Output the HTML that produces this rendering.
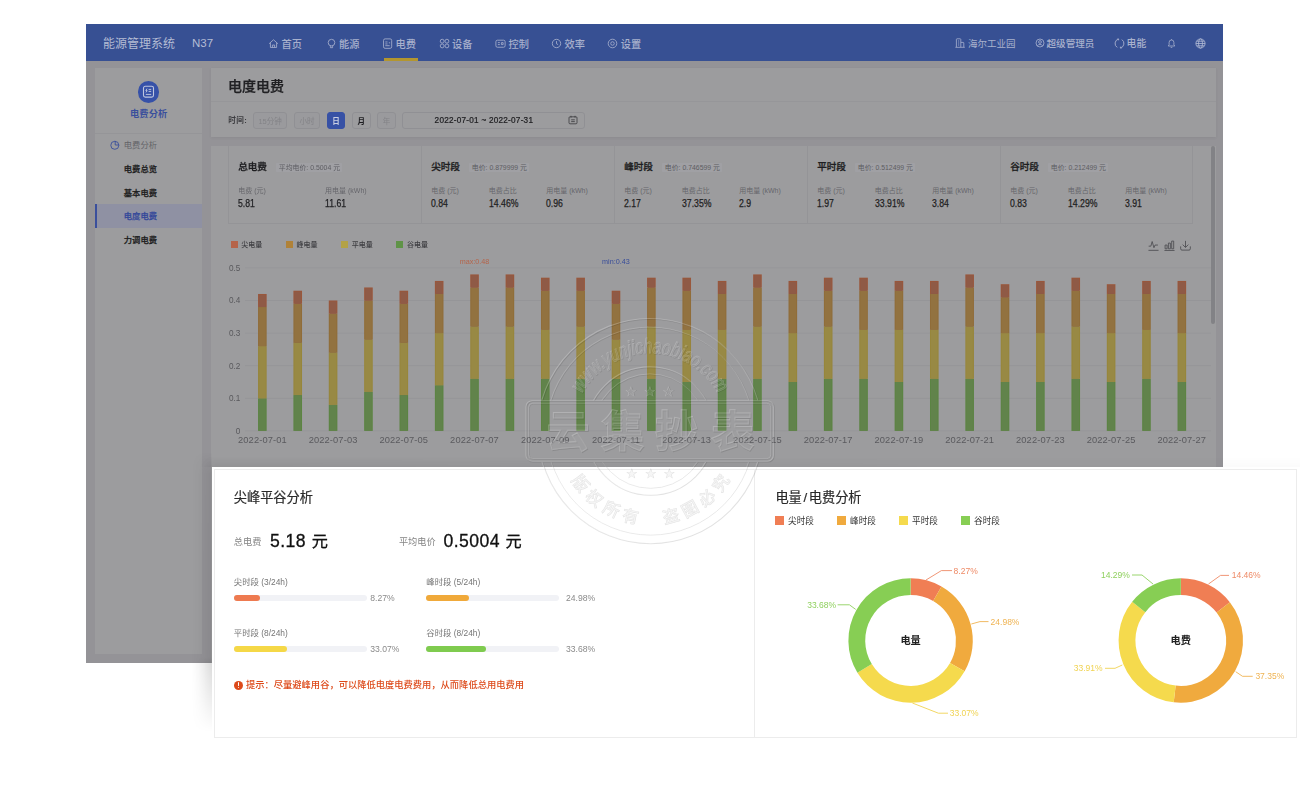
<!DOCTYPE html>
<html lang="zh-CN">
<head>
<meta charset="utf-8">
<title>电度电费 - 能源管理系统</title>
<style>
html,body{margin:0;padding:0;}
body{width:1300px;height:794px;background:#fff;position:relative;overflow:hidden;
 font-family:"Liberation Sans","Noto Sans CJK SC",sans-serif;}
.abs{position:absolute;}
.t{position:absolute;white-space:nowrap;line-height:1;}
#app{position:absolute;left:86px;top:24px;width:1136.5px;height:638.5px;background:#949397;overflow:hidden;}
#appin{position:absolute;left:0;top:0;width:100%;height:100%;filter:blur(0.35px);}
#nav{position:absolute;left:0;top:0;width:100%;height:36.5px;background:#375093;}
.nv{position:absolute;white-space:nowrap;line-height:1;color:#a8b1cd;font-size:10.2px;top:15.5px;font-weight:500;}
.panel{position:absolute;background:#9c9c9e;}
.sb{position:absolute;white-space:nowrap;line-height:1;font-size:8.3px;font-weight:500;color:#1d1d20;-webkit-text-stroke:0.25px;left:37.8px;}
.btn{position:absolute;box-sizing:border-box;border:1px solid #909094;border-radius:3px;height:17px;top:88px;
 font-size:7.5px;line-height:17.2px;text-align:center;color:#838387;background:#9a9a9d;}
.lab{position:absolute;white-space:nowrap;line-height:1;font-size:7px;color:#66666b;}
.val{position:absolute;white-space:nowrap;line-height:1;font-size:10.1px;color:#1f1f22;transform:scaleX(0.86);transform-origin:0 50%;-webkit-text-stroke:0.25px #1f1f22;}
.sth{position:absolute;white-space:nowrap;line-height:1;font-size:9.6px;font-weight:500;color:#1e1e21;-webkit-text-stroke:0.28px;}
.tag{position:absolute;white-space:nowrap;line-height:9.4px;height:9.4px;font-size:6.9px;color:#5d5d62;background:#a0a0a4;padding:0 2.4px;border-radius:1px;}
.lg{position:absolute;white-space:nowrap;line-height:1;font-size:7px;font-weight:500;color:#3e3e42;}
#cards{position:absolute;left:212px;top:467px;width:1092px;height:273px;background:#fff;}
#shl{position:absolute;left:192px;top:452px;width:20px;height:285px;background:linear-gradient(to right,rgba(0,0,0,0),rgba(0,0,0,0.035) 35%,rgba(0,0,0,0.14));
 -webkit-mask-image:linear-gradient(to bottom,rgba(0,0,0,0) 0,rgba(0,0,0,0.45) 22px,rgba(0,0,0,0.5) 205px,#000 212px,rgba(0,0,0,0.55) 245px,rgba(0,0,0,0) 280px);mask-image:linear-gradient(to bottom,rgba(0,0,0,0) 0,rgba(0,0,0,0.45) 22px,rgba(0,0,0,0.5) 205px,#000 212px,rgba(0,0,0,0.55) 245px,rgba(0,0,0,0) 280px);}
#sht{position:absolute;left:200px;top:457px;width:1100px;height:10px;background:linear-gradient(to bottom,rgba(0,0,0,0),rgba(0,0,0,0.055));
 -webkit-mask-image:linear-gradient(to right,rgba(0,0,0,0) 0,#000 16px,rgba(0,0,0,0.9) 200px,rgba(0,0,0,0.35) 700px,rgba(0,0,0,0.3) 100%);mask-image:linear-gradient(to right,rgba(0,0,0,0) 0,#000 16px,rgba(0,0,0,0.9) 200px,rgba(0,0,0,0.35) 700px,rgba(0,0,0,0.3) 100%);}
#cardsb{position:absolute;left:2.3px;top:2px;width:1082.7px;height:269px;border:1px solid #ececec;box-sizing:border-box;}
.ct{position:absolute;white-space:nowrap;line-height:1;font-size:13.2px;font-weight:400;color:#2a2a2a;-webkit-text-stroke:0.2px #2a2a2a;}
.pl{position:absolute;white-space:nowrap;line-height:1;font-size:8.4px;color:#757575;}
.pp{position:absolute;white-space:nowrap;line-height:1;font-size:8.6px;color:#8a8a8a;}
.track{position:absolute;height:6px;width:133px;border-radius:3px;background:#f1f2f6;}
.fill{position:absolute;left:0;top:0;height:6px;border-radius:3px;}
.cl{position:absolute;white-space:nowrap;line-height:1;font-size:8.6px;color:#333;}
</style>
</head>
<body>
<div id="app"><div id="appin">
<div id="nav">
<div class="t" style="left:17px;top:14px;font-size:12px;color:#b4bcd4;letter-spacing:0px;">能源管理系统</div>
<div class="t" style="left:106px;top:13.5px;font-size:11.5px;color:#b4bcd4;">N37</div>
<svg class="abs" style="left:182.1px;top:14.1px" width="11" height="11" viewBox="0 0 10 10" fill="none" stroke="#a3accb" stroke-width="0.8"><path d="M1 5.2 L5 1.6 L9 5.2 M2.2 4.6 V8.6 H7.8 V4.6 M4 8.6 V6.4 H6 V8.6" /></svg>
<div class="nv" style="left:195.6px;">首页</div>
<svg class="abs" style="left:239.6px;top:14.1px" width="11" height="11" viewBox="0 0 10 10" fill="none" stroke="#a3accb" stroke-width="0.8"><circle cx="5" cy="4.2" r="3"/><path d="M4 7.4 V8.8 H6 V7.4"/></svg>
<div class="nv" style="left:253.1px;">能源</div>
<svg class="abs" style="left:296.0px;top:14.1px" width="11" height="11" viewBox="0 0 10 10" fill="none" stroke="#a3accb" stroke-width="0.8"><rect x="1.4" y="0.8" width="7.4" height="8.6" rx="1.4"/><path d="M3 3.6 H5 M3 5.4 H5 M6.2 4.4 H7.4 M3 7 H7"/></svg>
<div class="nv" style="left:309.5px;">电费</div>
<svg class="abs" style="left:352.6px;top:14.1px" width="11" height="11" viewBox="0 0 10 10" fill="none" stroke="#a3accb" stroke-width="0.8"><circle cx="2.9" cy="2.9" r="1.75"/><circle cx="7.2" cy="2.9" r="1.75"/><circle cx="2.9" cy="7.2" r="1.75"/><circle cx="7.2" cy="7.2" r="1.75"/></svg>
<div class="nv" style="left:366.1px;">设备</div>
<svg class="abs" style="left:409.0px;top:14.1px" width="11" height="11" viewBox="0 0 10 10" fill="none" stroke="#a3accb" stroke-width="0.8"><rect x="0.8" y="2" width="8.4" height="6.4" rx="1.4"/><path d="M2.6 4.2 H4.4 M2.6 6 H4.4 M5.8 4.2 H7.4 V6 H5.8 Z"/></svg>
<div class="nv" style="left:422.5px;">控制</div>
<svg class="abs" style="left:465.0px;top:14.1px" width="11" height="11" viewBox="0 0 10 10" fill="none" stroke="#a3accb" stroke-width="0.8"><circle cx="5" cy="5" r="3.8"/><path d="M5 2.8 V5.2 L6.4 6"/></svg>
<div class="nv" style="left:478.5px;">效率</div>
<svg class="abs" style="left:521.3px;top:14.1px" width="11" height="11" viewBox="0 0 10 10" fill="none" stroke="#a3accb" stroke-width="0.8"><circle cx="5" cy="5" r="3.9"/><circle cx="5" cy="5" r="1.6"/></svg>
<div class="nv" style="left:534.8px;">设置</div>
<div class="abs" style="left:298px;top:34.2px;width:34px;height:2.4px;background:#b3962f;"></div>
<svg class="abs" style="left:869px;top:14.2px" width="10" height="10" viewBox="0 0 10 10" fill="none" stroke="#aab3d0" stroke-width="0.8"><path d="M1.4 9.2 V1.4 Q1.4 0.8 2 0.8 H5.2 Q5.8 0.8 5.8 1.4 V9.2 M5.8 4.4 H8.2 Q8.8 4.4 8.8 5 V9.2 M0.4 9.3 H9.8 M3 3 H4.2 M3 5 H4.2 M3 7 H4.2"/></svg>
<div class="nv" style="left:882px;font-size:9.5px;top:14.6px;font-weight:400;color:#a9b2cd;">海尔工业园</div>
<svg class="abs" style="left:949px;top:14.4px" width="10" height="10" viewBox="0 0 10 10" fill="none" stroke="#aab3d0" stroke-width="0.8"><circle cx="5" cy="5" r="4"/><circle cx="5" cy="4" r="1.4"/><path d="M2.4 7.8 C3 6 7 6 7.6 7.8"/></svg>
<div class="nv" style="left:960.5px;font-size:9.6px;top:14.6px;font-weight:500;color:#a9b2cd;">超级管理员</div>
<svg class="abs" style="left:1027.6px;top:13.6px" width="11" height="11" viewBox="0 0 11 11" fill="none" stroke="#a3accb" stroke-width="0.95"><path d="M4.4 1.1 A4.6 4.6 0 0 0 3.2 9.4 M6.6 9.9 A4.6 4.6 0 0 0 7.8 1.6 M3.3 1 H4.6 V2.3 M7.7 10 H6.4 V8.7"/></svg>
<div class="nv" style="left:1040.6px;font-size:9.8px;top:14.5px;font-weight:500;color:#a9b2cd;">电能</div>
<svg class="abs" style="left:1081px;top:13.8px" width="9" height="11" viewBox="0 0 9 11" fill="none" stroke="#a3accb" stroke-width="0.85"><path d="M1.2 8 H7.8 L6.9 6.8 V4.4 A2.4 2.4 0 0 0 2.1 4.4 V6.8 Z M3.7 9.4 H5.3 M4.5 1.2 V2"/></svg>
<svg class="abs" style="left:1109px;top:14px" width="11" height="11" viewBox="0 0 11 11" fill="none" stroke="#b4bcd6" stroke-width="0.8"><circle cx="5.5" cy="5.5" r="4.6"/><ellipse cx="5.5" cy="5.5" rx="2" ry="4.6"/><path d="M0.9 5.5 H10.1 M1.6 3.2 H9.4 M1.6 7.8 H9.4"/></svg>
</div>
<div class="panel" style="left:9.3px;top:43.8px;width:106.7px;height:586.4px;">
<div class="abs" style="left:0;top:65px;width:100%;height:1px;background:#959598;"></div>
<div class="abs" style="left:42.6px;top:13.7px;width:21.2px;height:21.2px;border-radius:50%;background:#3651a8;"></div>
<svg class="abs" style="left:47.2px;top:17.6px" width="13" height="13.4" viewBox="0 0 13 13.4" fill="none" stroke="#bfc6de" stroke-width="1.1"><rect x="1.5" y="1.3" width="10" height="10.8" rx="1.8"/><path d="M5 3.6 L3.8 5.6 H5.2 L4 7.4 M6.6 4.4 H9.2 M6.6 6.4 H9.2 M3.8 9.4 H9.2" stroke-width="0.95"/></svg>
<div class="t" style="left:0;width:106.7px;text-align:center;top:41.8px;font-size:9.3px;font-weight:700;color:#3a4f9c;">电费分析</div>
<svg class="abs" style="left:15px;top:72.6px" width="10" height="10" viewBox="0 0 10 10" fill="none" stroke="#3a4f9c" stroke-width="0.9"><circle cx="4.8" cy="5.3" r="4"/><path d="M5.2 0.9 V5 H9.2"/></svg>
<div class="t" style="left:28.5px;top:73.4px;font-size:8.3px;color:#636368;">电费分析</div>
<div class="abs" style="left:0;top:136.3px;width:106.7px;height:23.7px;background:#8f91a3;"></div>
<div class="abs" style="left:0;top:136.3px;width:1.7px;height:23.7px;background:#3a4f9c;"></div>
<div class="sb" style="left:28.5px;top:97.3px;color:#1d1d20;">电费总览</div>
<div class="sb" style="left:28.5px;top:121.0px;color:#1d1d20;">基本电费</div>
<div class="sb" style="left:28.5px;top:144.7px;color:#34489a;">电度电费</div>
<div class="sb" style="left:28.5px;top:168.3px;color:#1d1d20;">力调电费</div>
</div>
<div class="panel" style="left:124.5px;top:44.3px;width:1005px;height:68.7px;box-shadow:0 1px 3px rgba(0,0,0,0.06);"></div>
<div class="abs" style="left:124.5px;top:76.6px;width:1005px;height:1px;background:#969699;"></div>
<div class="t" style="left:142px;top:55px;font-size:14px;font-weight:500;color:#202023;-webkit-text-stroke:0.25px #202023;">电度电费</div>
<div class="t" style="left:142.2px;top:93.2px;font-size:7.6px;font-weight:700;color:#3c3c40;letter-spacing:0.5px;">时间:</div>
<div class="btn" style="left:167.3px;width:33.5px;">15分钟</div>
<div class="btn" style="left:208.2px;width:25.6px;">小时</div>
<div class="btn" style="left:241px;width:18px;background:#3751a5;border-color:#3751a5;color:#c9cee2;font-weight:700;">日</div>
<div class="btn" style="left:266px;width:18.5px;color:#1d1d20;font-weight:700;background:#9c9c9e;">月</div>
<div class="btn" style="left:291.3px;width:18.5px;">年</div>
<div class="btn" style="left:316.2px;width:183.2px;background:#9c9c9e;"></div>
<div class="t" style="left:348.6px;top:92.8px;font-size:8.2px;color:#1d1d20;letter-spacing:0.24px;-webkit-text-stroke:0.2px #1d1d20;">2022-07-01 ~ 2022-07-31</div>
<svg class="abs" style="left:481.5px;top:91.3px" width="10" height="10" viewBox="0 0 10 10" fill="none" stroke="#3a3a3e" stroke-width="0.8"><rect x="1" y="1.8" width="8" height="7" rx="1"/><path d="M3 0.8 V2.6 M7 0.8 V2.6 M3.2 4.8 H6.8 M3.2 6.6 H6.8"/></svg>
<div class="panel" style="left:124.5px;top:121.9px;width:1005px;height:520px;"></div>
<div class="abs" style="left:1125.3px;top:121.6px;width:3.8px;height:178.4px;border-radius:2px;background:#828286;"></div>
<div class="abs" style="left:142.2px;top:121.9px;width:964.8px;height:78.4px;box-sizing:border-box;border:1px solid #949497;border-top:none;"></div>
<div class="sth" style="left:152.2px;top:137.8px;">总电费</div>
<div class="tag" style="left:190.4px;top:138.6px;">平均电价: 0.5004 元</div>
<div class="lab" style="left:152.2px;top:162.6px;">电费 (元)</div>
<div class="val" style="left:152.2px;top:175.1px;">5.81</div>
<div class="lab" style="left:239.0px;top:162.6px;">用电量 (kWh)</div>
<div class="val" style="left:239.0px;top:175.1px;">11.61</div>
<div class="abs" style="left:334.6px;top:121.9px;width:1px;height:78.4px;background:#949497;"></div>
<div class="sth" style="left:345.2px;top:137.8px;">尖时段</div>
<div class="tag" style="left:383.4px;top:138.6px;">电价: 0.879999 元</div>
<div class="lab" style="left:345.2px;top:162.6px;">电费 (元)</div>
<div class="val" style="left:345.2px;top:175.1px;">0.84</div>
<div class="lab" style="left:402.7px;top:162.6px;">电费占比</div>
<div class="val" style="left:402.7px;top:175.1px;">14.46%</div>
<div class="lab" style="left:460.2px;top:162.6px;">用电量 (kWh)</div>
<div class="val" style="left:460.2px;top:175.1px;">0.96</div>
<div class="abs" style="left:527.6px;top:121.9px;width:1px;height:78.4px;background:#949497;"></div>
<div class="sth" style="left:538.2px;top:137.8px;">峰时段</div>
<div class="tag" style="left:576.4px;top:138.6px;">电价: 0.746599 元</div>
<div class="lab" style="left:538.2px;top:162.6px;">电费 (元)</div>
<div class="val" style="left:538.2px;top:175.1px;">2.17</div>
<div class="lab" style="left:595.7px;top:162.6px;">电费占比</div>
<div class="val" style="left:595.7px;top:175.1px;">37.35%</div>
<div class="lab" style="left:653.2px;top:162.6px;">用电量 (kWh)</div>
<div class="val" style="left:653.2px;top:175.1px;">2.9</div>
<div class="abs" style="left:720.6px;top:121.9px;width:1px;height:78.4px;background:#949497;"></div>
<div class="sth" style="left:731.2px;top:137.8px;">平时段</div>
<div class="tag" style="left:769.4px;top:138.6px;">电价: 0.512499 元</div>
<div class="lab" style="left:731.2px;top:162.6px;">电费 (元)</div>
<div class="val" style="left:731.2px;top:175.1px;">1.97</div>
<div class="lab" style="left:788.7px;top:162.6px;">电费占比</div>
<div class="val" style="left:788.7px;top:175.1px;">33.91%</div>
<div class="lab" style="left:846.2px;top:162.6px;">用电量 (kWh)</div>
<div class="val" style="left:846.2px;top:175.1px;">3.84</div>
<div class="abs" style="left:913.6px;top:121.9px;width:1px;height:78.4px;background:#949497;"></div>
<div class="sth" style="left:924.2px;top:137.8px;">谷时段</div>
<div class="tag" style="left:962.4px;top:138.6px;">电价: 0.212499 元</div>
<div class="lab" style="left:924.2px;top:162.6px;">电费 (元)</div>
<div class="val" style="left:924.2px;top:175.1px;">0.83</div>
<div class="lab" style="left:981.7px;top:162.6px;">电费占比</div>
<div class="val" style="left:981.7px;top:175.1px;">14.29%</div>
<div class="lab" style="left:1039.2px;top:162.6px;">用电量 (kWh)</div>
<div class="val" style="left:1039.2px;top:175.1px;">3.91</div>
<div class="abs" style="left:144.8px;top:217px;width:6.8px;height:6.8px;background:#b5644a;"></div>
<div class="lg" style="left:155.3px;top:217px;">尖电量</div>
<div class="abs" style="left:200.0px;top:217px;width:6.8px;height:6.8px;background:#b08238;"></div>
<div class="lg" style="left:210.5px;top:217px;">峰电量</div>
<div class="abs" style="left:255.2px;top:217px;width:6.8px;height:6.8px;background:#b3a247;"></div>
<div class="lg" style="left:265.7px;top:217px;">平电量</div>
<div class="abs" style="left:310.4px;top:217px;width:6.8px;height:6.8px;background:#5f9347;"></div>
<div class="lg" style="left:320.9px;top:217px;">谷电量</div>
<svg class="abs" style="left:1061.5px;top:215.6px" width="11" height="11" viewBox="0 0 10 10" fill="none" stroke="#4e4e53" stroke-width="0.8"><path d="M0.6 5.6 H2.6 L3.8 1.4 L5.4 7 L6.4 4.6 H9 M0.4 9.4 H9.6"/></svg>
<svg class="abs" style="left:1078.1px;top:215.6px" width="11" height="11" viewBox="0 0 10 10" fill="none" stroke="#4e4e53" stroke-width="0.8"><path d="M1 8 V4.6 H2.8 V8 Z M4 8 V2.8 H5.8 V8 Z M7 8 V1 H8.8 V8 Z M0.4 9.5 H9.6"/></svg>
<svg class="abs" style="left:1093.7px;top:215.6px" width="11" height="11" viewBox="0 0 10 10" fill="none" stroke="#4e4e53" stroke-width="0.8"><path d="M5 0.8 V6.6 M2.4 4.2 L5 6.8 L7.6 4.2 M0.6 5.8 V8 Q0.6 9.2 1.8 9.2 H8.2 Q9.4 9.2 9.4 8 V5.8"/></svg>
<svg class="abs" style="left:0;top:0" width="1136.5" height="638.5" viewBox="86 24 1136.5 638.5" font-family="Liberation Sans, sans-serif">
<rect x="245" y="430.5" width="966" height="0.8" fill="#949497"/>
<text x="240.3" y="433.8" text-anchor="end" font-size="8.2" fill="#59595d">0</text>
<rect x="245" y="397.9" width="966" height="0.8" fill="#949497"/>
<text x="240.3" y="401.2" text-anchor="end" font-size="8.2" fill="#59595d">0.1</text>
<rect x="245" y="365.3" width="966" height="0.8" fill="#949497"/>
<text x="240.3" y="368.6" text-anchor="end" font-size="8.2" fill="#59595d">0.2</text>
<rect x="245" y="332.7" width="966" height="0.8" fill="#949497"/>
<text x="240.3" y="336.0" text-anchor="end" font-size="8.2" fill="#59595d">0.3</text>
<rect x="245" y="300.1" width="966" height="0.8" fill="#949497"/>
<text x="240.3" y="303.4" text-anchor="end" font-size="8.2" fill="#59595d">0.4</text>
<rect x="245" y="267.5" width="966" height="0.8" fill="#949497"/>
<text x="240.3" y="270.8" text-anchor="end" font-size="8.2" fill="#59595d">0.5</text>
<rect x="258.05" y="398.30" width="8.6" height="32.60" fill="#5c8443"/>
<rect x="259.05" y="398.30" width="6.6" height="32.60" fill="#61834b"/>
<rect x="258.05" y="346.14" width="8.6" height="52.16" fill="#97863b"/>
<rect x="259.05" y="346.14" width="6.6" height="52.16" fill="#988944"/>
<rect x="258.05" y="307.02" width="8.6" height="39.12" fill="#906d39"/>
<rect x="259.05" y="307.02" width="6.6" height="39.12" fill="#927240"/>
<rect x="258.05" y="293.98" width="8.6" height="13.04" fill="#99573c"/>
<rect x="259.05" y="294.98" width="6.6" height="12.04" fill="#8f5a46"/>
<text x="262.4" y="443.4" text-anchor="middle" font-size="9.3" letter-spacing="0.12" fill="#5a5a5e">2022-07-01</text>
<rect x="293.42" y="395.04" width="8.6" height="35.86" fill="#5c8443"/>
<rect x="294.42" y="395.04" width="6.6" height="35.86" fill="#61834b"/>
<rect x="293.42" y="342.88" width="8.6" height="52.16" fill="#97863b"/>
<rect x="294.42" y="342.88" width="6.6" height="52.16" fill="#988944"/>
<rect x="293.42" y="303.76" width="8.6" height="39.12" fill="#906d39"/>
<rect x="294.42" y="303.76" width="6.6" height="39.12" fill="#927240"/>
<rect x="293.42" y="290.72" width="8.6" height="13.04" fill="#99573c"/>
<rect x="294.42" y="291.72" width="6.6" height="12.04" fill="#8f5a46"/>
<rect x="328.78" y="404.82" width="8.6" height="26.08" fill="#5c8443"/>
<rect x="329.78" y="404.82" width="6.6" height="26.08" fill="#61834b"/>
<rect x="328.78" y="352.66" width="8.6" height="52.16" fill="#97863b"/>
<rect x="329.78" y="352.66" width="6.6" height="52.16" fill="#988944"/>
<rect x="328.78" y="313.54" width="8.6" height="39.12" fill="#906d39"/>
<rect x="329.78" y="313.54" width="6.6" height="39.12" fill="#927240"/>
<rect x="328.78" y="300.50" width="8.6" height="13.04" fill="#99573c"/>
<rect x="329.78" y="301.50" width="6.6" height="12.04" fill="#8f5a46"/>
<text x="333.1" y="443.4" text-anchor="middle" font-size="9.3" letter-spacing="0.12" fill="#5a5a5e">2022-07-03</text>
<rect x="364.15" y="391.78" width="8.6" height="39.12" fill="#5c8443"/>
<rect x="365.15" y="391.78" width="6.6" height="39.12" fill="#61834b"/>
<rect x="364.15" y="339.62" width="8.6" height="52.16" fill="#97863b"/>
<rect x="365.15" y="339.62" width="6.6" height="52.16" fill="#988944"/>
<rect x="364.15" y="300.50" width="8.6" height="39.12" fill="#906d39"/>
<rect x="365.15" y="300.50" width="6.6" height="39.12" fill="#927240"/>
<rect x="364.15" y="287.46" width="8.6" height="13.04" fill="#99573c"/>
<rect x="365.15" y="288.46" width="6.6" height="12.04" fill="#8f5a46"/>
<rect x="399.51" y="395.04" width="8.6" height="35.86" fill="#5c8443"/>
<rect x="400.51" y="395.04" width="6.6" height="35.86" fill="#61834b"/>
<rect x="399.51" y="342.88" width="8.6" height="52.16" fill="#97863b"/>
<rect x="400.51" y="342.88" width="6.6" height="52.16" fill="#988944"/>
<rect x="399.51" y="303.76" width="8.6" height="39.12" fill="#906d39"/>
<rect x="400.51" y="303.76" width="6.6" height="39.12" fill="#927240"/>
<rect x="399.51" y="290.72" width="8.6" height="13.04" fill="#99573c"/>
<rect x="400.51" y="291.72" width="6.6" height="12.04" fill="#8f5a46"/>
<text x="403.8" y="443.4" text-anchor="middle" font-size="9.3" letter-spacing="0.12" fill="#5a5a5e">2022-07-05</text>
<rect x="434.88" y="385.26" width="8.6" height="45.64" fill="#5c8443"/>
<rect x="435.88" y="385.26" width="6.6" height="45.64" fill="#61834b"/>
<rect x="434.88" y="333.10" width="8.6" height="52.16" fill="#97863b"/>
<rect x="435.88" y="333.10" width="6.6" height="52.16" fill="#988944"/>
<rect x="434.88" y="293.98" width="8.6" height="39.12" fill="#906d39"/>
<rect x="435.88" y="293.98" width="6.6" height="39.12" fill="#927240"/>
<rect x="434.88" y="280.94" width="8.6" height="13.04" fill="#99573c"/>
<rect x="435.88" y="281.94" width="6.6" height="12.04" fill="#8f5a46"/>
<rect x="470.24" y="378.74" width="8.6" height="52.16" fill="#5c8443"/>
<rect x="471.24" y="378.74" width="6.6" height="52.16" fill="#61834b"/>
<rect x="470.24" y="326.58" width="8.6" height="52.16" fill="#97863b"/>
<rect x="471.24" y="326.58" width="6.6" height="52.16" fill="#988944"/>
<rect x="470.24" y="287.46" width="8.6" height="39.12" fill="#906d39"/>
<rect x="471.24" y="287.46" width="6.6" height="39.12" fill="#927240"/>
<rect x="470.24" y="274.42" width="8.6" height="13.04" fill="#99573c"/>
<rect x="471.24" y="275.42" width="6.6" height="12.04" fill="#8f5a46"/>
<text x="474.5" y="443.4" text-anchor="middle" font-size="9.3" letter-spacing="0.12" fill="#5a5a5e">2022-07-07</text>
<rect x="505.61" y="378.74" width="8.6" height="52.16" fill="#5c8443"/>
<rect x="506.61" y="378.74" width="6.6" height="52.16" fill="#61834b"/>
<rect x="505.61" y="326.58" width="8.6" height="52.16" fill="#97863b"/>
<rect x="506.61" y="326.58" width="6.6" height="52.16" fill="#988944"/>
<rect x="505.61" y="287.46" width="8.6" height="39.12" fill="#906d39"/>
<rect x="506.61" y="287.46" width="6.6" height="39.12" fill="#927240"/>
<rect x="505.61" y="274.42" width="8.6" height="13.04" fill="#99573c"/>
<rect x="506.61" y="275.42" width="6.6" height="12.04" fill="#8f5a46"/>
<rect x="540.97" y="378.74" width="8.6" height="52.16" fill="#5c8443"/>
<rect x="541.97" y="378.74" width="6.6" height="52.16" fill="#61834b"/>
<rect x="540.97" y="329.84" width="8.6" height="48.90" fill="#97863b"/>
<rect x="541.97" y="329.84" width="6.6" height="48.90" fill="#988944"/>
<rect x="540.97" y="290.72" width="8.6" height="39.12" fill="#906d39"/>
<rect x="541.97" y="290.72" width="6.6" height="39.12" fill="#927240"/>
<rect x="540.97" y="277.68" width="8.6" height="13.04" fill="#99573c"/>
<rect x="541.97" y="278.68" width="6.6" height="12.04" fill="#8f5a46"/>
<text x="545.3" y="443.4" text-anchor="middle" font-size="9.3" letter-spacing="0.12" fill="#5a5a5e">2022-07-09</text>
<rect x="576.34" y="378.74" width="8.6" height="52.16" fill="#5c8443"/>
<rect x="577.34" y="378.74" width="6.6" height="52.16" fill="#61834b"/>
<rect x="576.34" y="326.58" width="8.6" height="52.16" fill="#97863b"/>
<rect x="577.34" y="326.58" width="6.6" height="52.16" fill="#988944"/>
<rect x="576.34" y="290.72" width="8.6" height="35.86" fill="#906d39"/>
<rect x="577.34" y="290.72" width="6.6" height="35.86" fill="#927240"/>
<rect x="576.34" y="277.68" width="8.6" height="13.04" fill="#99573c"/>
<rect x="577.34" y="278.68" width="6.6" height="12.04" fill="#8f5a46"/>
<rect x="611.70" y="378.74" width="8.6" height="52.16" fill="#5c8443"/>
<rect x="612.70" y="378.74" width="6.6" height="52.16" fill="#61834b"/>
<rect x="611.70" y="339.62" width="8.6" height="39.12" fill="#97863b"/>
<rect x="612.70" y="339.62" width="6.6" height="39.12" fill="#988944"/>
<rect x="611.70" y="303.76" width="8.6" height="35.86" fill="#906d39"/>
<rect x="612.70" y="303.76" width="6.6" height="35.86" fill="#927240"/>
<rect x="611.70" y="290.72" width="8.6" height="13.04" fill="#99573c"/>
<rect x="612.70" y="291.72" width="6.6" height="12.04" fill="#8f5a46"/>
<text x="616.0" y="443.4" text-anchor="middle" font-size="9.3" letter-spacing="0.12" fill="#5a5a5e">2022-07-11</text>
<rect x="647.07" y="378.74" width="8.6" height="52.16" fill="#5c8443"/>
<rect x="648.07" y="378.74" width="6.6" height="52.16" fill="#61834b"/>
<rect x="647.07" y="326.58" width="8.6" height="52.16" fill="#97863b"/>
<rect x="648.07" y="326.58" width="6.6" height="52.16" fill="#988944"/>
<rect x="647.07" y="287.46" width="8.6" height="39.12" fill="#906d39"/>
<rect x="648.07" y="287.46" width="6.6" height="39.12" fill="#927240"/>
<rect x="647.07" y="277.68" width="8.6" height="9.78" fill="#99573c"/>
<rect x="648.07" y="278.68" width="6.6" height="8.78" fill="#8f5a46"/>
<rect x="682.43" y="382.00" width="8.6" height="48.90" fill="#5c8443"/>
<rect x="683.43" y="382.00" width="6.6" height="48.90" fill="#61834b"/>
<rect x="682.43" y="329.84" width="8.6" height="52.16" fill="#97863b"/>
<rect x="683.43" y="329.84" width="6.6" height="52.16" fill="#988944"/>
<rect x="682.43" y="290.72" width="8.6" height="39.12" fill="#906d39"/>
<rect x="683.43" y="290.72" width="6.6" height="39.12" fill="#927240"/>
<rect x="682.43" y="277.68" width="8.6" height="13.04" fill="#99573c"/>
<rect x="683.43" y="278.68" width="6.6" height="12.04" fill="#8f5a46"/>
<text x="686.7" y="443.4" text-anchor="middle" font-size="9.3" letter-spacing="0.12" fill="#5a5a5e">2022-07-13</text>
<rect x="717.80" y="378.74" width="8.6" height="52.16" fill="#5c8443"/>
<rect x="718.80" y="378.74" width="6.6" height="52.16" fill="#61834b"/>
<rect x="717.80" y="329.84" width="8.6" height="48.90" fill="#97863b"/>
<rect x="718.80" y="329.84" width="6.6" height="48.90" fill="#988944"/>
<rect x="717.80" y="293.98" width="8.6" height="35.86" fill="#906d39"/>
<rect x="718.80" y="293.98" width="6.6" height="35.86" fill="#927240"/>
<rect x="717.80" y="280.94" width="8.6" height="13.04" fill="#99573c"/>
<rect x="718.80" y="281.94" width="6.6" height="12.04" fill="#8f5a46"/>
<rect x="753.16" y="378.74" width="8.6" height="52.16" fill="#5c8443"/>
<rect x="754.16" y="378.74" width="6.6" height="52.16" fill="#61834b"/>
<rect x="753.16" y="326.58" width="8.6" height="52.16" fill="#97863b"/>
<rect x="754.16" y="326.58" width="6.6" height="52.16" fill="#988944"/>
<rect x="753.16" y="287.46" width="8.6" height="39.12" fill="#906d39"/>
<rect x="754.16" y="287.46" width="6.6" height="39.12" fill="#927240"/>
<rect x="753.16" y="274.42" width="8.6" height="13.04" fill="#99573c"/>
<rect x="754.16" y="275.42" width="6.6" height="12.04" fill="#8f5a46"/>
<text x="757.5" y="443.4" text-anchor="middle" font-size="9.3" letter-spacing="0.12" fill="#5a5a5e">2022-07-15</text>
<rect x="788.53" y="382.00" width="8.6" height="48.90" fill="#5c8443"/>
<rect x="789.53" y="382.00" width="6.6" height="48.90" fill="#61834b"/>
<rect x="788.53" y="333.10" width="8.6" height="48.90" fill="#97863b"/>
<rect x="789.53" y="333.10" width="6.6" height="48.90" fill="#988944"/>
<rect x="788.53" y="293.98" width="8.6" height="39.12" fill="#906d39"/>
<rect x="789.53" y="293.98" width="6.6" height="39.12" fill="#927240"/>
<rect x="788.53" y="280.94" width="8.6" height="13.04" fill="#99573c"/>
<rect x="789.53" y="281.94" width="6.6" height="12.04" fill="#8f5a46"/>
<rect x="823.89" y="378.74" width="8.6" height="52.16" fill="#5c8443"/>
<rect x="824.89" y="378.74" width="6.6" height="52.16" fill="#61834b"/>
<rect x="823.89" y="326.58" width="8.6" height="52.16" fill="#97863b"/>
<rect x="824.89" y="326.58" width="6.6" height="52.16" fill="#988944"/>
<rect x="823.89" y="290.72" width="8.6" height="35.86" fill="#906d39"/>
<rect x="824.89" y="290.72" width="6.6" height="35.86" fill="#927240"/>
<rect x="823.89" y="277.68" width="8.6" height="13.04" fill="#99573c"/>
<rect x="824.89" y="278.68" width="6.6" height="12.04" fill="#8f5a46"/>
<text x="828.2" y="443.4" text-anchor="middle" font-size="9.3" letter-spacing="0.12" fill="#5a5a5e">2022-07-17</text>
<rect x="859.26" y="378.74" width="8.6" height="52.16" fill="#5c8443"/>
<rect x="860.26" y="378.74" width="6.6" height="52.16" fill="#61834b"/>
<rect x="859.26" y="329.84" width="8.6" height="48.90" fill="#97863b"/>
<rect x="860.26" y="329.84" width="6.6" height="48.90" fill="#988944"/>
<rect x="859.26" y="290.72" width="8.6" height="39.12" fill="#906d39"/>
<rect x="860.26" y="290.72" width="6.6" height="39.12" fill="#927240"/>
<rect x="859.26" y="277.68" width="8.6" height="13.04" fill="#99573c"/>
<rect x="860.26" y="278.68" width="6.6" height="12.04" fill="#8f5a46"/>
<rect x="894.62" y="382.00" width="8.6" height="48.90" fill="#5c8443"/>
<rect x="895.62" y="382.00" width="6.6" height="48.90" fill="#61834b"/>
<rect x="894.62" y="329.84" width="8.6" height="52.16" fill="#97863b"/>
<rect x="895.62" y="329.84" width="6.6" height="52.16" fill="#988944"/>
<rect x="894.62" y="290.72" width="8.6" height="39.12" fill="#906d39"/>
<rect x="895.62" y="290.72" width="6.6" height="39.12" fill="#927240"/>
<rect x="894.62" y="280.94" width="8.6" height="9.78" fill="#99573c"/>
<rect x="895.62" y="281.94" width="6.6" height="8.78" fill="#8f5a46"/>
<text x="898.9" y="443.4" text-anchor="middle" font-size="9.3" letter-spacing="0.12" fill="#5a5a5e">2022-07-19</text>
<rect x="929.99" y="378.74" width="8.6" height="52.16" fill="#5c8443"/>
<rect x="930.99" y="378.74" width="6.6" height="52.16" fill="#61834b"/>
<rect x="929.99" y="329.84" width="8.6" height="48.90" fill="#97863b"/>
<rect x="930.99" y="329.84" width="6.6" height="48.90" fill="#988944"/>
<rect x="929.99" y="293.98" width="8.6" height="35.86" fill="#906d39"/>
<rect x="930.99" y="293.98" width="6.6" height="35.86" fill="#927240"/>
<rect x="929.99" y="280.94" width="8.6" height="13.04" fill="#99573c"/>
<rect x="930.99" y="281.94" width="6.6" height="12.04" fill="#8f5a46"/>
<rect x="965.35" y="378.74" width="8.6" height="52.16" fill="#5c8443"/>
<rect x="966.35" y="378.74" width="6.6" height="52.16" fill="#61834b"/>
<rect x="965.35" y="326.58" width="8.6" height="52.16" fill="#97863b"/>
<rect x="966.35" y="326.58" width="6.6" height="52.16" fill="#988944"/>
<rect x="965.35" y="287.46" width="8.6" height="39.12" fill="#906d39"/>
<rect x="966.35" y="287.46" width="6.6" height="39.12" fill="#927240"/>
<rect x="965.35" y="274.42" width="8.6" height="13.04" fill="#99573c"/>
<rect x="966.35" y="275.42" width="6.6" height="12.04" fill="#8f5a46"/>
<text x="969.7" y="443.4" text-anchor="middle" font-size="9.3" letter-spacing="0.12" fill="#5a5a5e">2022-07-21</text>
<rect x="1000.72" y="382.00" width="8.6" height="48.90" fill="#5c8443"/>
<rect x="1001.72" y="382.00" width="6.6" height="48.90" fill="#61834b"/>
<rect x="1000.72" y="333.10" width="8.6" height="48.90" fill="#97863b"/>
<rect x="1001.72" y="333.10" width="6.6" height="48.90" fill="#988944"/>
<rect x="1000.72" y="297.24" width="8.6" height="35.86" fill="#906d39"/>
<rect x="1001.72" y="297.24" width="6.6" height="35.86" fill="#927240"/>
<rect x="1000.72" y="284.20" width="8.6" height="13.04" fill="#99573c"/>
<rect x="1001.72" y="285.20" width="6.6" height="12.04" fill="#8f5a46"/>
<rect x="1036.08" y="382.00" width="8.6" height="48.90" fill="#5c8443"/>
<rect x="1037.08" y="382.00" width="6.6" height="48.90" fill="#61834b"/>
<rect x="1036.08" y="333.10" width="8.6" height="48.90" fill="#97863b"/>
<rect x="1037.08" y="333.10" width="6.6" height="48.90" fill="#988944"/>
<rect x="1036.08" y="293.98" width="8.6" height="39.12" fill="#906d39"/>
<rect x="1037.08" y="293.98" width="6.6" height="39.12" fill="#927240"/>
<rect x="1036.08" y="280.94" width="8.6" height="13.04" fill="#99573c"/>
<rect x="1037.08" y="281.94" width="6.6" height="12.04" fill="#8f5a46"/>
<text x="1040.4" y="443.4" text-anchor="middle" font-size="9.3" letter-spacing="0.12" fill="#5a5a5e">2022-07-23</text>
<rect x="1071.45" y="378.74" width="8.6" height="52.16" fill="#5c8443"/>
<rect x="1072.45" y="378.74" width="6.6" height="52.16" fill="#61834b"/>
<rect x="1071.45" y="326.58" width="8.6" height="52.16" fill="#97863b"/>
<rect x="1072.45" y="326.58" width="6.6" height="52.16" fill="#988944"/>
<rect x="1071.45" y="290.72" width="8.6" height="35.86" fill="#906d39"/>
<rect x="1072.45" y="290.72" width="6.6" height="35.86" fill="#927240"/>
<rect x="1071.45" y="277.68" width="8.6" height="13.04" fill="#99573c"/>
<rect x="1072.45" y="278.68" width="6.6" height="12.04" fill="#8f5a46"/>
<rect x="1106.81" y="382.00" width="8.6" height="48.90" fill="#5c8443"/>
<rect x="1107.81" y="382.00" width="6.6" height="48.90" fill="#61834b"/>
<rect x="1106.81" y="333.10" width="8.6" height="48.90" fill="#97863b"/>
<rect x="1107.81" y="333.10" width="6.6" height="48.90" fill="#988944"/>
<rect x="1106.81" y="293.98" width="8.6" height="39.12" fill="#906d39"/>
<rect x="1107.81" y="293.98" width="6.6" height="39.12" fill="#927240"/>
<rect x="1106.81" y="284.20" width="8.6" height="9.78" fill="#99573c"/>
<rect x="1107.81" y="285.20" width="6.6" height="8.78" fill="#8f5a46"/>
<text x="1111.1" y="443.4" text-anchor="middle" font-size="9.3" letter-spacing="0.12" fill="#5a5a5e">2022-07-25</text>
<rect x="1142.17" y="378.74" width="8.6" height="52.16" fill="#5c8443"/>
<rect x="1143.17" y="378.74" width="6.6" height="52.16" fill="#61834b"/>
<rect x="1142.17" y="329.84" width="8.6" height="48.90" fill="#97863b"/>
<rect x="1143.17" y="329.84" width="6.6" height="48.90" fill="#988944"/>
<rect x="1142.17" y="293.98" width="8.6" height="35.86" fill="#906d39"/>
<rect x="1143.17" y="293.98" width="6.6" height="35.86" fill="#927240"/>
<rect x="1142.17" y="280.94" width="8.6" height="13.04" fill="#99573c"/>
<rect x="1143.17" y="281.94" width="6.6" height="12.04" fill="#8f5a46"/>
<rect x="1177.54" y="382.00" width="8.6" height="48.90" fill="#5c8443"/>
<rect x="1178.54" y="382.00" width="6.6" height="48.90" fill="#61834b"/>
<rect x="1177.54" y="333.10" width="8.6" height="48.90" fill="#97863b"/>
<rect x="1178.54" y="333.10" width="6.6" height="48.90" fill="#988944"/>
<rect x="1177.54" y="293.98" width="8.6" height="39.12" fill="#906d39"/>
<rect x="1178.54" y="293.98" width="6.6" height="39.12" fill="#927240"/>
<rect x="1177.54" y="280.94" width="8.6" height="13.04" fill="#99573c"/>
<rect x="1178.54" y="281.94" width="6.6" height="12.04" fill="#8f5a46"/>
<text x="1181.8" y="443.4" text-anchor="middle" font-size="9.3" letter-spacing="0.12" fill="#5a5a5e">2022-07-27</text>
<text x="474.6" y="263.8" text-anchor="middle" font-size="7.2" fill="#b5644a">max:0.48</text>
<text x="615.9" y="263.8" text-anchor="middle" font-size="7.2" fill="#374c9a">min:0.43</text>
</svg>
</div></div>
<div id="shl"></div><div id="sht"></div>
<div id="cards"><div id="cardsb"></div>
<div class="abs" style="left:542px;top:2px;width:1px;height:268px;background:#ececec;"></div>
<div class="ct" style="left:21.8px;top:23.6px;">尖峰平谷分析</div>
<div class="t" style="left:21.8px;top:71px;font-size:9.2px;color:#858585;">总电费</div>
<div class="t" style="left:58px;top:65.7px;font-size:17.6px;letter-spacing:0.45px;word-spacing:0.3px;color:#111;-webkit-text-stroke:0.3px #111;">5.18 <span style="font-size:16.2px;letter-spacing:0;">元</span></div>
<div class="t" style="left:186.9px;top:71px;font-size:9.2px;color:#858585;">平均电价</div>
<div class="t" style="left:231.4px;top:65.7px;font-size:17.6px;letter-spacing:0.45px;word-spacing:0.3px;color:#111;-webkit-text-stroke:0.3px #111;">0.5004 <span style="font-size:16.2px;letter-spacing:0;">元</span></div>
<div class="pl" style="left:21.8px;top:111.1px;">尖时段 (3/24h)</div>
<div class="track" style="left:21.8px;top:127.6px;"><div class="fill" style="width:26.6px;background:#ee7a50;"></div></div>
<div class="pp" style="left:158.3px;top:127.2px;">8.27%</div>
<div class="pl" style="left:214.3px;top:111.1px;">峰时段 (5/24h)</div>
<div class="track" style="left:214.3px;top:127.6px;"><div class="fill" style="width:42.7px;background:#f0a93a;"></div></div>
<div class="pp" style="left:354.0px;top:127.2px;">24.98%</div>
<div class="pl" style="left:21.8px;top:162.2px;">平时段 (8/24h)</div>
<div class="track" style="left:21.8px;top:178.7px;"><div class="fill" style="width:53.6px;background:#f5d847;"></div></div>
<div class="pp" style="left:158.3px;top:178.3px;">33.07%</div>
<div class="pl" style="left:214.3px;top:162.2px;">谷时段 (8/24h)</div>
<div class="track" style="left:214.3px;top:178.7px;"><div class="fill" style="width:60px;background:#7fcb4f;"></div></div>
<div class="pp" style="left:354.0px;top:178.3px;">33.68%</div>
<div class="abs" style="left:22px;top:213.5px;width:9.4px;height:9.4px;border-radius:50%;background:#dd4a1a;"></div>
<div class="abs" style="left:26.1px;top:215.3px;width:1.3px;height:3.6px;background:#fff;border-radius:0.5px;"></div>
<div class="abs" style="left:26.1px;top:219.7px;width:1.3px;height:1.3px;background:#fff;border-radius:50%;"></div>
<div class="t" style="left:34px;top:213.5px;font-size:9.27px;font-weight:500;color:#dd4a1a;">提示：尽量避峰用谷，可以降低电度电费费用，从而降低总用电费用</div>
<div class="ct" style="left:563.4px;top:23.9px;">电量<span style="margin:0 1.7px;">/</span>电费分析</div>
<div class="abs" style="left:562.7px;top:48.6px;width:9px;height:9.4px;background:#f07e54;"></div>
<div class="cl" style="left:576.1px;top:49.8px;">尖时段</div>
<div class="abs" style="left:624.7px;top:48.6px;width:9px;height:9.4px;background:#f0aa3e;"></div>
<div class="cl" style="left:638.1px;top:49.8px;">峰时段</div>
<div class="abs" style="left:686.7px;top:48.6px;width:9px;height:9.4px;background:#f5da4d;"></div>
<div class="cl" style="left:700.1px;top:49.8px;">平时段</div>
<div class="abs" style="left:748.7px;top:48.6px;width:9px;height:9.4px;background:#87ce54;"></div>
<div class="cl" style="left:762.1px;top:49.8px;">谷时段</div>
<svg class="abs" style="left:0;top:0" width="1088" height="274" viewBox="212 467 1088 274" font-family="Liberation Sans, sans-serif">
<path d="M910.60 578.30 A62.2 62.2 0 0 1 941.49 586.51 L933.14 601.09 A45.4 45.4 0 0 0 910.60 595.10 Z" fill="#f07e54"/>
<path d="M941.49 586.51 A62.2 62.2 0 0 1 964.63 671.32 L950.04 662.99 A45.4 45.4 0 0 0 933.14 601.09 Z" fill="#f0aa3e"/>
<path d="M964.63 671.32 A62.2 62.2 0 0 1 857.42 672.77 L871.79 664.05 A45.4 45.4 0 0 0 950.04 662.99 Z" fill="#f5da4d"/>
<path d="M857.42 672.77 A62.2 62.2 0 0 1 910.60 578.30 L910.60 595.10 A45.4 45.4 0 0 0 871.79 664.05 Z" fill="#87ce54"/>
<path d="M926.0 580.0 L941.4 570.6 L952.0 570.6" fill="none" stroke="#ee8a66" stroke-width="0.9"/>
<text x="953.6" y="573.9" text-anchor="start" font-size="8.5" fill="#ee8a66">8.27%</text>
<path d="M971.3 624.0 L980.0 621.6 L988.5 621.6" fill="none" stroke="#efb352" stroke-width="0.9"/>
<text x="990.6" y="624.6" text-anchor="start" font-size="8.5" fill="#efb352">24.98%</text>
<path d="M912.4 703.0 L938.4 713.2 L948.0 713.2" fill="none" stroke="#f0d352" stroke-width="0.9"/>
<text x="949.8" y="716.2" text-anchor="start" font-size="8.5" fill="#f0d352">33.07%</text>
<path d="M855.7 609.4 L849.4 604.8 L837.6 604.8" fill="none" stroke="#8fd05e" stroke-width="0.9"/>
<text x="836.0" y="607.8" text-anchor="end" font-size="8.5" fill="#8fd05e">33.68%</text>
<text x="910.6" y="644.3" text-anchor="middle" font-size="10.2" font-weight="700" fill="#222" font-family="Liberation Sans, Noto Sans CJK SC, sans-serif">电量</text>
<path d="M1180.80 578.30 A62.2 62.2 0 0 1 1229.85 602.25 L1216.60 612.58 A45.4 45.4 0 0 0 1180.80 595.10 Z" fill="#f07e54"/>
<path d="M1229.85 602.25 A62.2 62.2 0 0 1 1173.74 702.30 L1175.65 685.61 A45.4 45.4 0 0 0 1216.60 612.58 Z" fill="#f0aa3e"/>
<path d="M1173.74 702.30 A62.2 62.2 0 0 1 1132.18 601.70 L1145.32 612.18 A45.4 45.4 0 0 0 1175.65 685.61 Z" fill="#f5da4d"/>
<path d="M1132.18 601.70 A62.2 62.2 0 0 1 1180.84 578.30 L1180.83 595.10 A45.4 45.4 0 0 0 1145.32 612.18 Z" fill="#87ce54"/>
<path d="M1208.5 584.0 L1220.5 575.4 L1229.0 575.4" fill="none" stroke="#ee8a66" stroke-width="0.9"/>
<text x="1231.8" y="578.4" text-anchor="start" font-size="8.5" fill="#ee8a66">14.46%</text>
<path d="M1235.7 671.7 L1242.5 676.3 L1252.7 676.3" fill="none" stroke="#efb352" stroke-width="0.9"/>
<text x="1255.4" y="679.2" text-anchor="start" font-size="8.5" fill="#efb352">37.35%</text>
<path d="M1122.3 665.0 L1115.0 668.3 L1105.0 668.3" fill="none" stroke="#f0d352" stroke-width="0.9"/>
<text x="1102.6" y="671.2" text-anchor="end" font-size="8.5" fill="#f0d352">33.91%</text>
<path d="M1153.0 584.0 L1142.0 575.0 L1132.0 575.0" fill="none" stroke="#8fd05e" stroke-width="0.9"/>
<text x="1129.8" y="578.0" text-anchor="end" font-size="8.5" fill="#8fd05e">14.29%</text>
<text x="1180.8" y="644.3" text-anchor="middle" font-size="10.2" font-weight="700" fill="#222" font-family="Liberation Sans, Noto Sans CJK SC, sans-serif">电费</text>
</svg>
</div>
<svg class="abs" style="left:0;top:0;pointer-events:none" width="1300" height="794" viewBox="0 0 1300 794">
<defs>
<path id="wmtopa" d="M573.0999999999999 431.5 A77.5 77.5 0 0 1 728.0999999999999 431.5"/>
<path id="wmbota" d="M557.5999999999999 431.5 A93 93 0 0 0 743.5999999999999 431.5"/>
<path id="wmtopb" d="M572.3 430.7 A77.5 77.5 0 0 1 727.3 430.7"/>
<path id="wmbotb" d="M556.8 430.7 A93 93 0 0 0 742.8 430.7"/>
<mask id="wmmask" maskUnits="userSpaceOnUse" x="500" y="300" width="300" height="260"><rect x="500" y="300" width="300" height="260" fill="#fff"/><rect x="526" y="400.7" width="248.2" height="61.3" rx="6" fill="#000"/></mask>
</defs>
<g opacity="0.11" fill="none" stroke="#000" stroke-width="1.1">
<g mask="url(#wmmask)"><circle cx="650.5999999999999" cy="431.5" r="112.2"/><circle cx="650.5999999999999" cy="431.5" r="103.6" stroke-width="0.8"/>
<circle cx="650.5999999999999" cy="431.5" r="63.8"/><circle cx="650.5999999999999" cy="431.5" r="56.8" stroke-width="0.8"/></g>
<rect x="526.8" y="401.5" width="247.4" height="60.5" rx="6"/>
<rect x="529.4" y="404.1" width="242.2" height="55.3" rx="4" stroke-width="0.7"/>
</g>
<g opacity="0.11" fill="#000" fill-opacity="0.35" stroke="#000" stroke-width="0.7" font-family="Liberation Sans, Noto Sans CJK SC, sans-serif">
<text font-size="21" font-style="italic"><textPath href="#wmtopa" startOffset="50%" text-anchor="middle" textLength="166" lengthAdjust="spacingAndGlyphs">www.yunjichaobiao.com</textPath></text>
<text font-size="16.5" font-weight="500" letter-spacing="5.2"><textPath href="#wmbota" startOffset="51%" text-anchor="middle">版权所有　盗图必究</textPath></text>
<text x="631.8" y="395.40000000000003" font-size="10.5" text-anchor="middle">★</text>
<text x="631.8" y="477.3" font-size="10.5" text-anchor="middle">★</text>
<text x="650.8" y="395.40000000000003" font-size="10.5" text-anchor="middle">★</text>
<text x="650.8" y="477.3" font-size="10.5" text-anchor="middle">★</text>
<text x="669.3" y="395.40000000000003" font-size="10.5" text-anchor="middle">★</text>
<text x="669.3" y="477.3" font-size="10.5" text-anchor="middle">★</text>
</g>
<g opacity="0.11" fill="#000" fill-opacity="0.4" stroke="#000" stroke-width="1.1" font-family="Liberation Sans, Noto Sans CJK SC, sans-serif" font-weight="700">
<text x="568.8 623.3 677.3 733.3" y="447.6" font-size="43" text-anchor="middle">云集抄表</text>
</g>
<g opacity="0.22" fill="none" stroke="#fff" stroke-width="1.1">
<g mask="url(#wmmask)"><circle cx="649.8" cy="430.7" r="112.2"/><circle cx="649.8" cy="430.7" r="103.6" stroke-width="0.8"/>
<circle cx="649.8" cy="430.7" r="63.8"/><circle cx="649.8" cy="430.7" r="56.8" stroke-width="0.8"/></g>
<rect x="526" y="400.7" width="247.4" height="60.5" rx="6"/>
<rect x="528.6" y="403.3" width="242.2" height="55.3" rx="4" stroke-width="0.7"/>
</g>
<g opacity="0.22" fill="#fff" fill-opacity="0.35" stroke="#fff" stroke-width="0.7" font-family="Liberation Sans, Noto Sans CJK SC, sans-serif">
<text font-size="21" font-style="italic"><textPath href="#wmtopb" startOffset="50%" text-anchor="middle" textLength="166" lengthAdjust="spacingAndGlyphs">www.yunjichaobiao.com</textPath></text>
<text font-size="16.5" font-weight="500" letter-spacing="5.2"><textPath href="#wmbotb" startOffset="51%" text-anchor="middle">版权所有　盗图必究</textPath></text>
<text x="631" y="394.6" font-size="10.5" text-anchor="middle">★</text>
<text x="631" y="476.5" font-size="10.5" text-anchor="middle">★</text>
<text x="650" y="394.6" font-size="10.5" text-anchor="middle">★</text>
<text x="650" y="476.5" font-size="10.5" text-anchor="middle">★</text>
<text x="668.5" y="394.6" font-size="10.5" text-anchor="middle">★</text>
<text x="668.5" y="476.5" font-size="10.5" text-anchor="middle">★</text>
</g>
<g opacity="0.22" fill="#fff" fill-opacity="0.4" stroke="#fff" stroke-width="1.1" font-family="Liberation Sans, Noto Sans CJK SC, sans-serif" font-weight="700">
<text x="568 622.5 676.5 732.5" y="446.8" font-size="43" text-anchor="middle">云集抄表</text>
</g>
</svg></body>
</html>
